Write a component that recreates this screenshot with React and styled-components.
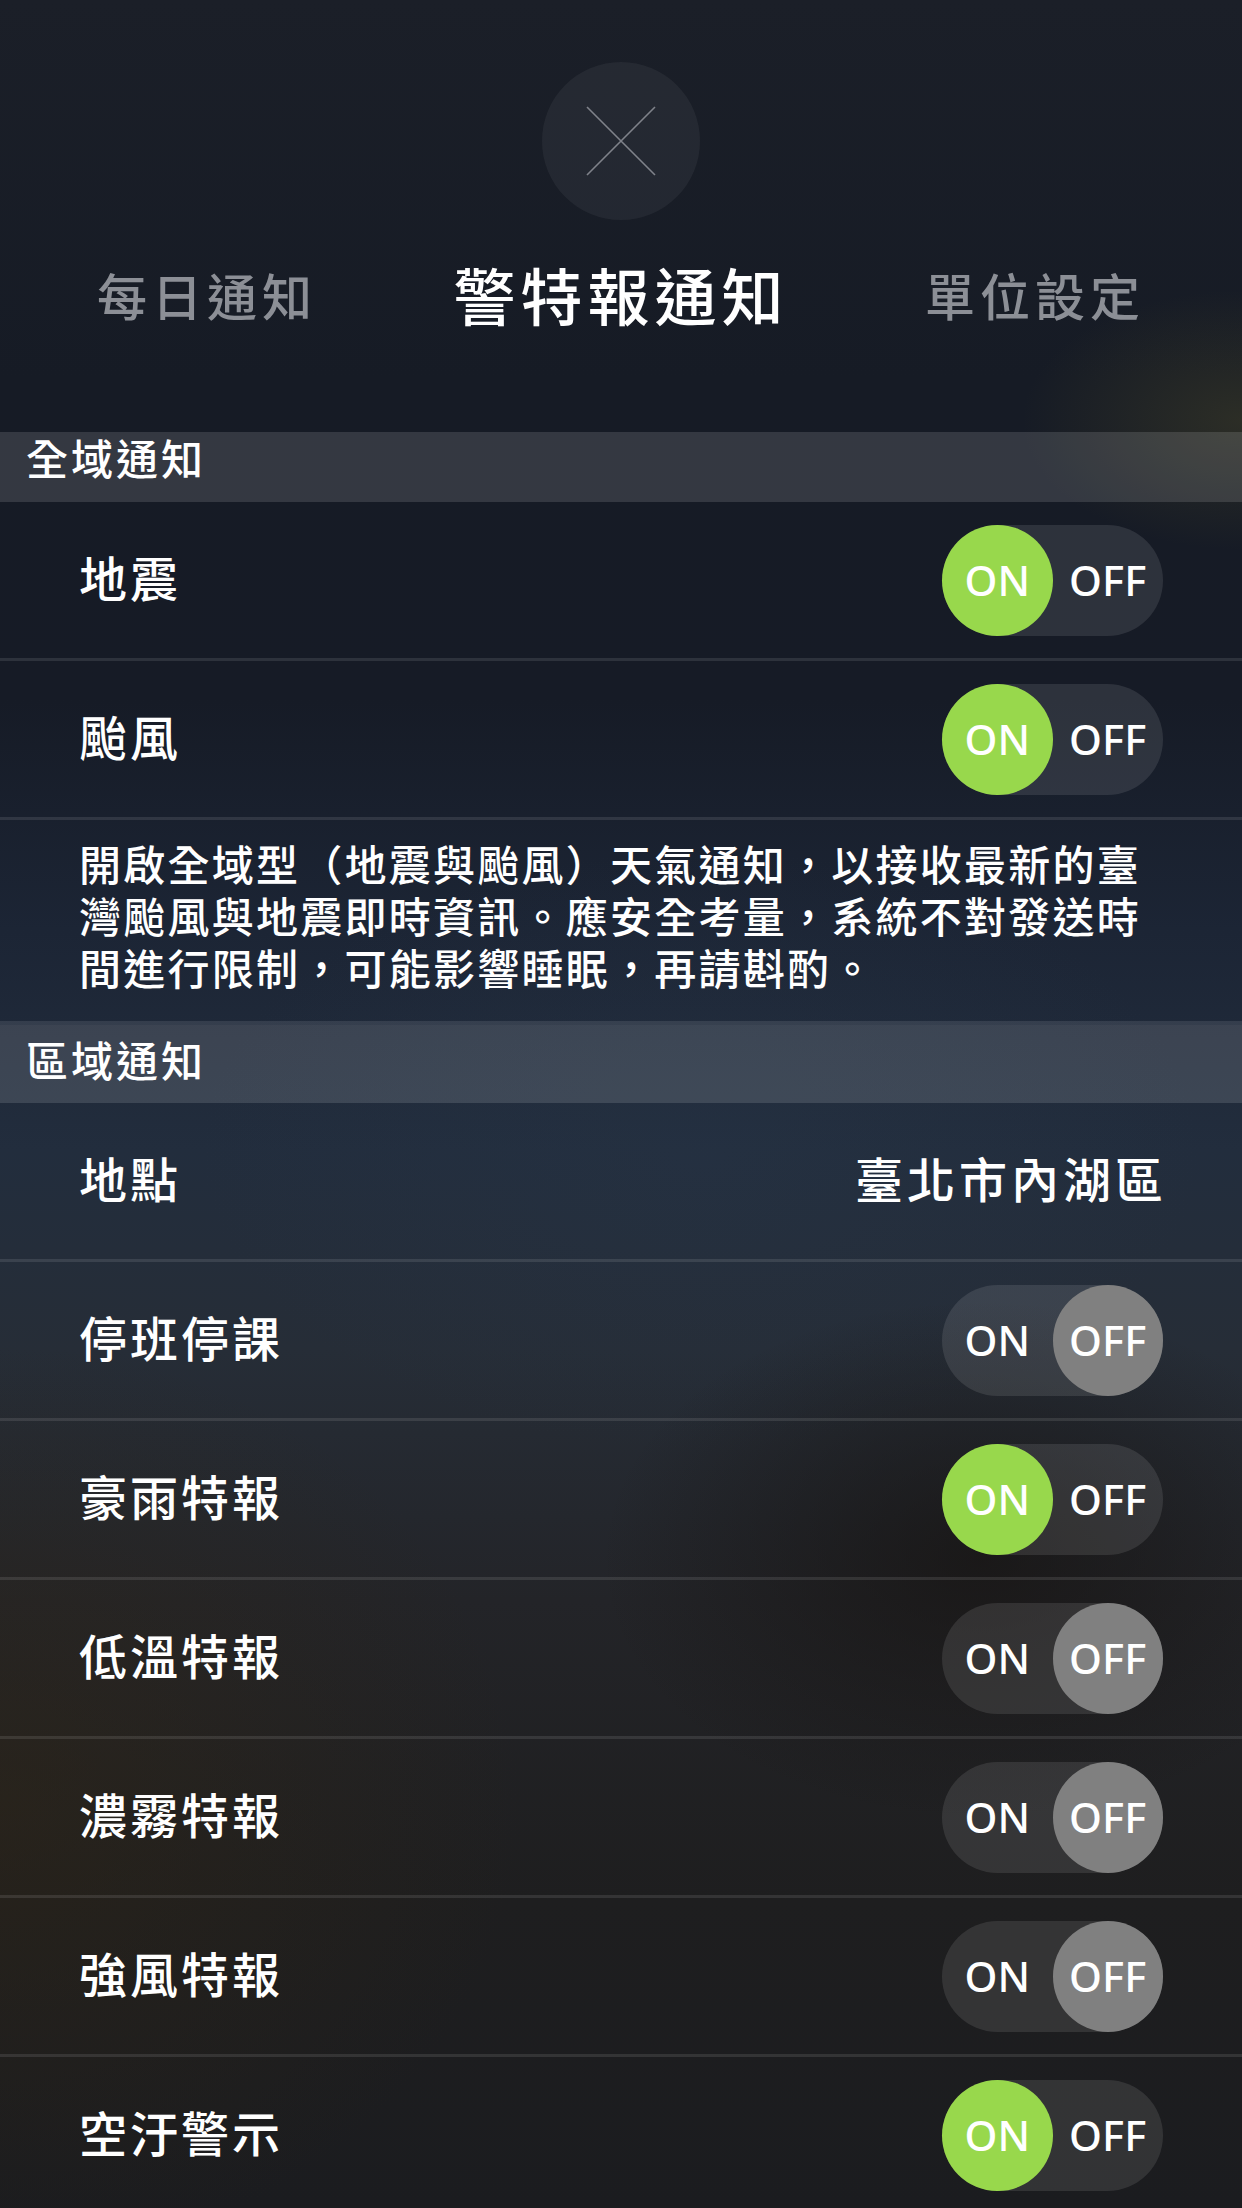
import React from "react";
import styled, { createGlobalStyle } from "styled-components";

const GlobalStyle = createGlobalStyle`
  html, body {
    margin: 0;
    padding: 0;
    background: #161b25;
  }
  * {
    box-sizing: border-box;
  }
`;

const cjk = `"Noto Sans CJK TC", "Noto Sans", sans-serif`;

const Page = styled.div`
  width: 1242px;
  min-height: 2208px;
  overflow: hidden;
  font-family: ${cjk};
  color: #fff;
  background:
    radial-gradient(ellipse 220px 130px at 1242px 420px, rgba(95, 88, 40, 0.3), transparent),
    radial-gradient(ellipse 520px 460px at 0 1800px, rgba(48, 38, 22, 0.5), transparent),
    radial-gradient(ellipse 380px 260px at 980px 1560px, rgba(22, 19, 17, 0.7), transparent),
    radial-gradient(ellipse 500px 300px at 700px 1150px, rgba(40, 54, 72, 0.35), transparent),
    linear-gradient(
      180deg,
      #1b1f28 0,
      #161b25 380px,
      #161b26 700px,
      #1c2535 930px,
      #222d3d 1150px,
      #262d37 1350px,
      #232428 1600px,
      #1e1e1f 1900px,
      #1b1c1f 2208px
    );
`;

const CloseWrap = styled.div`
  display: flex;
  justify-content: center;
  padding-top: 62px;
`;

const CloseButton = styled.button`
  width: 158px;
  height: 158px;
  border-radius: 50%;
  border: none;
  padding: 0;
  background: rgba(255, 255, 255, 0.05);
  display: flex;
  align-items: center;
  justify-content: center;
`;

const Tabs = styled.div`
  display: grid;
  grid-template-columns: repeat(3, 1fr);
  height: 212px;
  padding-top: 34px;
`;

const Tab = styled.div`
  text-align: center;
  line-height: 80px;
  font-size: ${(p) => (p.$active ? "62px" : "50px")};
  letter-spacing: 5px;
  font-weight: 500;
  color: ${(p) => (p.$active ? "#ffffff" : "#8c8f96")};
`;

const SectionHeader = styled.div`
  height: ${(p) => (p.$tall ? "78px" : "70px")};
  padding: ${(p) => (p.$tall ? "8px" : "2px")} 0 0 26px;
  line-height: ${(p) => (p.$tall ? "52px" : "46px")};
  font-size: 42px;
  letter-spacing: 3px;
  font-weight: 500;
  background: rgba(255, 255, 255, 0.13);
`;

const Row = styled.div`
  height: 159px;
  display: flex;
  align-items: center;
  justify-content: space-between;
  padding: 0 79px 0 79px;
  border-bottom: 3px solid rgba(255, 255, 255, 0.1);
`;

const Label = styled.div`
  font-size: 48px;
  letter-spacing: 3px;
  font-weight: 500;
  margin-bottom: 8px;
`;

const Value = styled.div`
  font-size: 48px;
  letter-spacing: 4px;
  font-weight: 500;
  margin-right: -4px;
  margin-bottom: 8px;
`;

const Note = styled.div`
  height: 205px;
  padding: 17px 70px 0 79px;
  font-size: 42px;
  letter-spacing: 2.25px;
  line-height: 52px;
  font-weight: 500;
  border-bottom: 4px solid rgba(255, 255, 255, 0.1);
`;

const Track = styled.div`
  display: flex;
  width: 221px;
  height: 111px;
  border-radius: 56px;
  background: rgba(255, 255, 255, 0.1);
`;

const Knob = styled.div`
  width: 110.5px;
  height: 111px;
  border-radius: 50%;
  display: flex;
  align-items: center;
  justify-content: center;
  font-family: "Noto Sans", "Open Sans", sans-serif;
  font-size: 42px;
  font-weight: 500;
  color: #fff;
  padding-bottom: 2px;
  background: ${(p) => (p.$active ? p.$color : "transparent")};
`;

const Toggle = ({ on }) => (
  <Track>
    <Knob $active={on} $color="#98d84c">ON</Knob>
    <Knob $active={!on} $color="#808080">OFF</Knob>
  </Track>
);

const globalItems = [
  { name: "地震", on: true },
  { name: "颱風", on: true },
];

const localItems = [
  { name: "停班停課", on: false },
  { name: "豪雨特報", on: true },
  { name: "低溫特報", on: false },
  { name: "濃霧特報", on: false },
  { name: "強風特報", on: false },
  { name: "空汙警示", on: true },
];

const App = () => {
  return (
    <Page>
      <GlobalStyle />
      <CloseWrap>
        <CloseButton aria-label="close">
          <svg width="70" height="70" viewBox="0 0 70 70">
            <path
              d="M1 1 L69 69 M69 1 L1 69"
              stroke="#7f828a"
              strokeWidth="1.6"
              fill="none"
            />
          </svg>
        </CloseButton>
      </CloseWrap>
      <Tabs>
        <Tab>每日通知</Tab>
        <Tab $active>警特報通知</Tab>
        <Tab>單位設定</Tab>
      </Tabs>

      <SectionHeader>全域通知</SectionHeader>
      {globalItems.map((item) => (
        <Row key={item.name}>
          <Label>{item.name}</Label>
          <Toggle on={item.on} />
        </Row>
      ))}
      <Note>
        開啟全域型（地震與颱風）天氣通知，以接收最新的臺灣颱風與地震即時資訊。應安全考量，系統不對發送時間進行限制，可能影響睡眠，再請斟酌。
      </Note>

      <SectionHeader $tall>區域通知</SectionHeader>
      <Row>
        <Label>地點</Label>
        <Value>臺北市內湖區</Value>
      </Row>
      {localItems.map((item) => (
        <Row key={item.name}>
          <Label>{item.name}</Label>
          <Toggle on={item.on} />
        </Row>
      ))}
    </Page>
  );
};

export default App;
